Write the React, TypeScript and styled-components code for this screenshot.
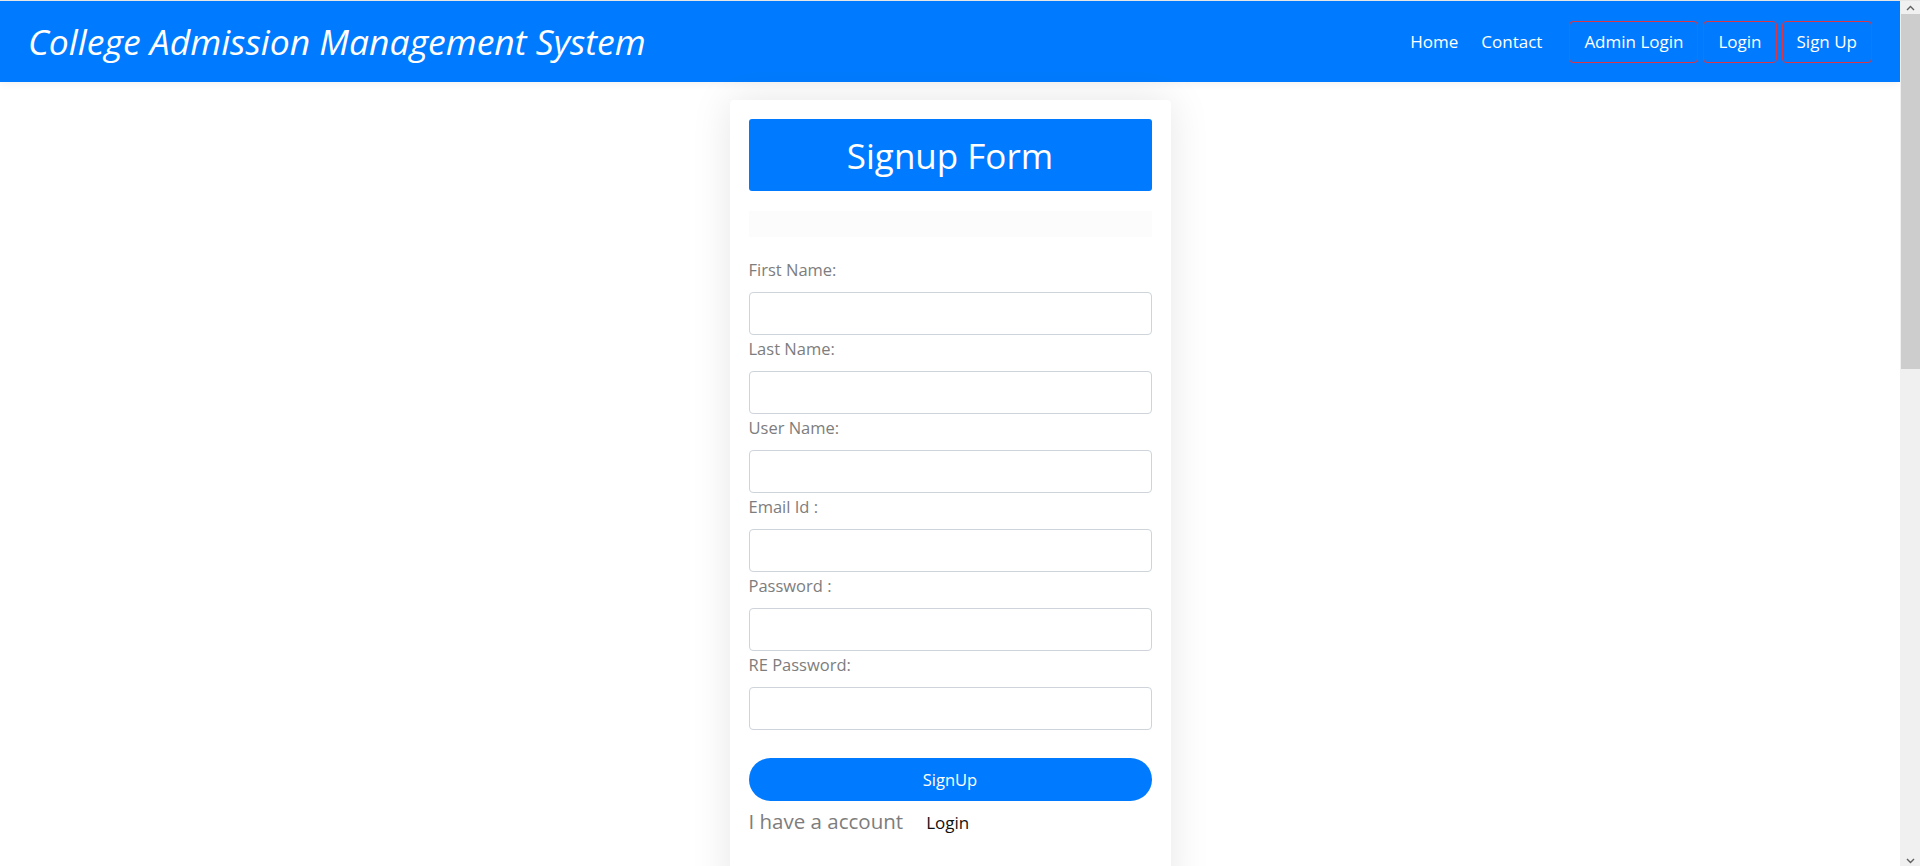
import React from 'react';
import styled, { createGlobalStyle } from 'styled-components';

const GlobalStyle = createGlobalStyle`
  html, body {
    margin: 0;
    padding: 0;
    background: #fff;
  }
  body {
    font-family: 'Open Sans', 'Noto Sans', Arial, sans-serif;
    border-top: 1px solid #e6e6e6;
  }
  * {
    box-sizing: border-box;
  }
`;

/* ------------------------------- Layout ------------------------------- */
const Shell = styled.div`
  display: flex;
  align-items: flex-start;
`;

const Page = styled.div`
  flex: 1;
  min-width: 0;
`;

/* ------------------------ Window scrollbar (drawn) ------------------------ */
const ScrollTrack = styled.aside`
  position: sticky;
  top: 0;
  width: 20px;
  height: 100vh;
  background: #f0f0f0;
  display: flex;
  flex-direction: column;
  align-items: center;
`;

const ScrollArrow = styled.div`
  height: 13px;
  width: 100%;
  display: flex;
  align-items: center;
  justify-content: center;
`;

const ScrollThumb = styled.div`
  width: 19px;
  height: 355px;
  margin-left: 1px;
  background: #cdcdcd;
`;

const ScrollSpacer = styled.div`
  flex: 1;
`;

const Chevron = ({ down }: { down?: boolean }) => (
  <svg width="9" height="6" viewBox="0 0 9 6">
    <path
      d={down ? 'M1 1 L4.5 4.5 L8 1' : 'M1 5 L4.5 1.5 L8 5'}
      fill="none"
      stroke="#606060"
      strokeWidth="1.4"
    />
  </svg>
);

/* -------------------------------- Navbar -------------------------------- */
const Navbar = styled.nav`
  height: 81px;
  background: #007bff;
  display: flex;
  align-items: center;
  justify-content: space-between;
  padding: 0 28px;
  box-shadow: 0 2px 8px rgba(0, 0, 0, 0.06);
`;

const Brand = styled.a`
  color: #fff;
  font-style: italic;
  font-size: 35.5px;
  text-decoration: none;
  margin-top: -2px;
`;

const NavList = styled.div`
  display: flex;
  align-items: center;
`;

const NavLink = styled.a<{ $last?: boolean }>`
  color: #fff;
  font-size: 17px;
  text-decoration: none;
  margin-right: ${(p) => (p.$last ? '27px' : '23px')};
`;

const NavButton = styled.a<{ $first?: boolean }>`
  height: 42px;
  display: inline-flex;
  align-items: center;
  padding: 0 14px;
  color: #fff;
  font-size: 17px;
  text-decoration: none;
  border: 1px solid #dc3545;
  border-radius: 4px;
  margin-left: ${(p) => (p.$first ? '0' : '5px')};
`;

/* --------------------------------- Form --------------------------------- */
const Main = styled.main`
  display: flex;
  justify-content: center;
  padding-top: 18px;
  min-height: 1950px;
`;

const Card = styled.div`
  width: 441px;
  height: 800px;
  background: #fff;
  border-radius: 4px;
  padding: 19px;
  box-shadow: 0 0 40px rgba(0, 0, 0, 0.1);
`;

const Header = styled.h1`
  margin: 0;
  height: 72px;
  background: #007bff;
  border-radius: 3px;
  color: #fff;
  font-size: 35px;
  font-weight: 400;
  display: flex;
  align-items: center;
  justify-content: center;
`;

const Message = styled.div`
  height: 26px;
  margin: 20px 0 19px;
  background: #fcfcfc;
`;

const Label = styled.label`
  display: block;
  color: #7d7d7d;
  font-size: 16.5px;
  line-height: 27px;
  margin-bottom: 9px;
`;

const Input = styled.input`
  display: block;
  width: 100%;
  height: 43px;
  border: 1px solid #ced4da;
  border-radius: 4px;
  padding: 6px 12px;
  font-size: 16px;
  font-family: inherit;
  outline: none;
`;

const SubmitButton = styled.button`
  display: block;
  width: 100%;
  height: 43px;
  margin-top: 28px;
  border: none;
  border-radius: 22px;
  background: #007bff;
  color: #fff;
  font-family: inherit;
  font-size: 16.5px;
  cursor: pointer;
`;

const Footer = styled.div`
  display: flex;
  align-items: baseline;
  margin-top: 6px;
`;

const Muted = styled.span`
  color: #7d7d7d;
  font-size: 20.5px;
`;

const FooterLink = styled.a`
  color: #111;
  font-size: 17px;
  margin-left: 23px;
  text-decoration: none;
`;

const fields = [
  { label: 'First Name:', type: 'text' },
  { label: 'Last Name:', type: 'text' },
  { label: 'User Name:', type: 'text' },
  { label: 'Email Id :', type: 'email' },
  { label: 'Password :', type: 'password' },
  { label: 'RE Password:', type: 'password' },
];

const App = () => {
  return (
    <>
      <GlobalStyle />
      <Shell>
        <Page>
          <Navbar>
            <Brand href="#">College Admission Management System</Brand>
            <NavList>
              <NavLink href="#">Home</NavLink>
              <NavLink href="#" $last>
                Contact
              </NavLink>
              <NavButton href="#" $first>
                Admin Login
              </NavButton>
              <NavButton href="#">Login</NavButton>
              <NavButton href="#">Sign Up</NavButton>
            </NavList>
          </Navbar>

          <Main>
            <Card>
              <Header>Signup Form</Header>
              <Message />
              <form onSubmit={(e) => e.preventDefault()}>
                {fields.map((f) => (
                  <div key={f.label}>
                    <Label>{f.label}</Label>
                    <Input type={f.type} />
                  </div>
                ))}
                <SubmitButton type="submit">SignUp</SubmitButton>
              </form>
              <Footer>
                <Muted>I have a account</Muted>
                <FooterLink href="#">Login</FooterLink>
              </Footer>
            </Card>
          </Main>
        </Page>

        <ScrollTrack aria-hidden>
          <ScrollArrow>
            <Chevron />
          </ScrollArrow>
          <ScrollThumb />
          <ScrollSpacer />
          <ScrollArrow>
            <Chevron down />
          </ScrollArrow>
        </ScrollTrack>
      </Shell>
    </>
  );
};

export default App;
